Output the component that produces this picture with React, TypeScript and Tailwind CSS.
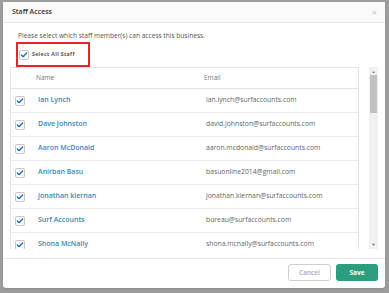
import { Check } from "lucide-react";

const staff = [
  { name: "Ian Lynch", email: "ian.lynch@surfaccounts.com" },
  { name: "Dave Johnston", email: "david.johnston@surfaccounts.com" },
  { name: "Aaron McDonald", email: "aaron.mcdonald@surfaccounts.com" },
  { name: "Anirban Basu", email: "basuonline2014@gmail.com" },
  { name: "jonathan kiernan", email: "jonathan.kiernan@surfaccounts.com" },
  { name: "Surf Accounts", email: "bureau@surfaccounts.com" },
  { name: "Shona McNally", email: "shona.mcnally@surfaccounts.com" },
];

function Box() {
  return (
    <span className="flex h-[10px] w-[10px] items-center justify-center rounded-[2px] border border-[#c8c8c8] bg-white">
      <Check className="h-[8px] w-[8px] text-[#1b6fb3]" strokeWidth={4} />
    </span>
  );
}

export default function App() {
  return (
    <div className="h-[293px] w-[389px] overflow-hidden bg-[#9d9d9d] pl-[3px] pt-[2px] font-['Open_Sans',sans-serif]">
      <div className="flex h-[286px] w-[382px] flex-col rounded-[3px] bg-white shadow">
        {/* header */}
        <div className="flex h-[21px] items-center justify-between border-b border-[#e6e6e6] bg-[#fbfafb] pl-[9px] pr-[8px]">
          <span className="text-[7px] font-semibold text-[#333]">Staff Access</span>
          <span className="text-[9px] leading-none text-[#c4c4c4]">×</span>
        </div>

        {/* body */}
        <div className="px-[7px] pt-[8px]">
          <p className="pl-[8px] text-[6.6px] leading-[10px] text-[#555]">
            Please select which staff member(s) can access this business.
          </p>
          <div className="ml-[6px] mt-[1px] flex h-[25px] w-[74px] items-center gap-[3px] border-2 border-[#e3262b] pl-[1px] pt-[1px]">
            <Box />
            <span className="text-[5.2px] font-bold tracking-[0.35px] text-[#555]">Select All Staff</span>
          </div>

          <div className="flex gap-[10px]">
            <div className="h-[182px] w-[349px] overflow-hidden border border-b-0 border-[#e4e4e4]">
              <div className="flex h-[21px] items-center border-b border-[#e4e4e4] text-[6.5px] text-[#777]">
                <span className="w-[193px] pl-[25px]">Name</span>
                <span>Email</span>
              </div>
              {staff.map((s, i) => (
                <div key={i} className="flex h-[24px] items-center border-b border-[#ebebeb]">
                  <span className="pl-[4px] pr-[13px]">
                    <Box />
                  </span>
                  <span className="w-[168px] text-[7px] font-semibold text-[#3a88b8]">{s.name}</span>
                  <span className="text-[6.8px] text-[#666]">{s.email}</span>
                </div>
              ))}
            </div>
            <div className="flex h-[182px] w-[9px] flex-col items-center bg-[#f1f1f1]">
              <span className="mt-[2px] text-[4px] leading-[5px] text-[#777]">▲</span>
              <div className="mt-[1px] h-[38px] w-[7px] bg-[#c1c1c1]" />
              <div className="flex-1" />
              <span className="mb-[2px] text-[4px] leading-[5px] text-[#555]">▼</span>
            </div>
          </div>
        </div>

        {/* footer */}
        <div className="mt-[9px] flex flex-1 items-center justify-end gap-[5px] border-t border-[#e6e6e6] pr-[7px] pb-[2px]">
          <button className="h-[17px] w-[43px] rounded-[3px] border border-[#cfcfcf] bg-white text-[6.5px] font-semibold text-[#aaa]">
            Cancel
          </button>
          <button className="h-[17px] w-[42px] rounded-[3px] bg-[#2a9e7f] text-[6.5px] font-bold text-white">
            Save
          </button>
        </div>
      </div>
    </div>
  );
}
